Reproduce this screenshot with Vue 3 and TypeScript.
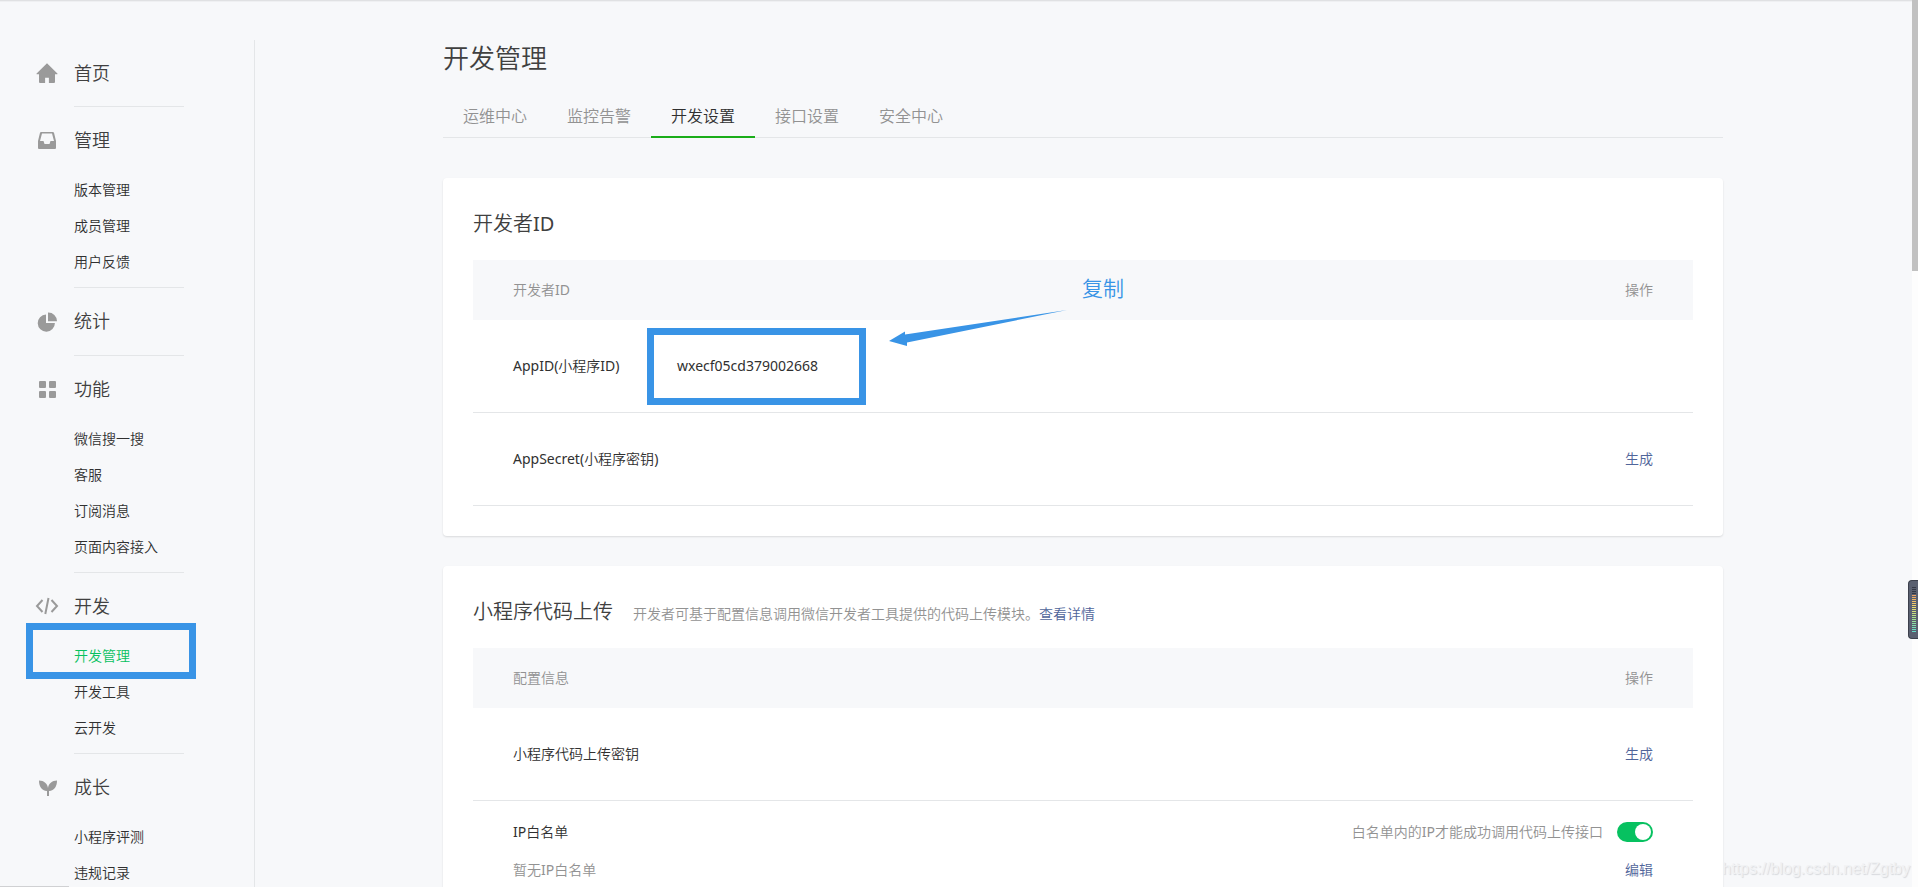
<script setup lang="ts">
import { ref } from 'vue'

interface NavGroup {
  title: string
  icon: string
  children: string[]
}

const groups: NavGroup[] = [
  { title: '首页', icon: 'home', children: [] },
  { title: '管理', icon: 'inbox', children: ['版本管理', '成员管理', '用户反馈'] },
  { title: '统计', icon: 'pie', children: [] },
  { title: '功能', icon: 'grid', children: ['微信搜一搜', '客服', '订阅消息', '页面内容接入'] },
  { title: '开发', icon: 'code', children: ['开发管理', '开发工具', '云开发'] },
  { title: '成长', icon: 'leaf', children: ['小程序评测', '违规记录'] },
]
const activeChild = '开发管理'

const tabs = ['运维中心', '监控告警', '开发设置', '接口设置', '安全中心']
const activeTab = ref('开发设置')
const whitelistOn = ref(true)
</script>

<template>
  <div class="page">
    <div class="shell">
      <nav class="sidebar" aria-label="主导航">
        <section v-for="g in groups" :key="g.title" class="group">
          <a href="#" class="group-title">
            <svg class="icon" viewBox="0 0 24 24" aria-hidden="true">
              <path v-if="g.icon === 'home'" d="M12 2.200 1.600 12.600c-.3.4-.1.7.3.7H4v7.600q0 1 1 1h5.100v-5.200h3.800v5.200H19q1 0 1-1v-7.600h2.100c.4 0 .6-.3.300-.7z" />
              <path v-else-if="g.icon === 'inbox'" fill-rule="evenodd" d="M6.200 4h11.600q.9 0 1.200.8L21 13v7q0 1-1 1H4q-1 0-1-1v-7l2-8.200Q5.300 4 6.200 4zM7 5.500 5 13h3.500l1 3h5l1-3H19l-2-7.500z" />
              <path v-else-if="g.icon === 'pie'" d="M11 5.500V14h8.900A8.600 8.600 0 1 1 11 5.500zM13 3.500a8.700 8.700 0 0 1 9 8.700h-9z" />
              <path v-else-if="g.icon === 'grid'" d="M5 4h5q1 0 1 1v5q0 1-1 1H5q-1 0-1-1V5q0-1 1-1zm10 0h5q1 0 1 1v5q0 1-1 1h-5q-1 0-1-1V5q0-1 1-1zM5 14h5q1 0 1 1v5q0 1-1 1H5q-1 0-1-1v-5q0-1 1-1zm10 0h5q1 0 1 1v5q0 1-1 1h-5q-1 0-1-1v-5q0-1 1-1z" />
              <path v-else-if="g.icon === 'code'" class="stroke" d="M7.500 6 2 12l5.500 6M16.500 6l5.500 6-5.500 6M13.500 4l-3.200 16" />
              <path v-else d="M4 5.500c5 .2 8.500 3 9 7.500.5-4.500 4-7.300 9-7.500 0 6-2.500 10-8 10.500v5h-2v-5C6.500 15.500 4 11.500 4 5.500z" />
            </svg>
            <span>{{ g.title }}</span>
          </a>
          <ul v-if="g.children.length" class="children">
            <li v-for="c in g.children" :key="c">
              <a href="#" :class="{ current: c === activeChild }">{{ c }}</a>
              <span v-if="c === activeChild" class="mark mark-nav"></span>
            </li>
          </ul>
        </section>
      </nav>

      <main class="main">
        <div class="content">
          <h1>开发管理</h1>
          <div class="tabs" role="tablist">
            <button
              v-for="t in tabs"
              :key="t"
              type="button"
              role="tab"
              class="tab"
              :class="{ active: t === activeTab }"
              :aria-selected="t === activeTab"
              @click="activeTab = t"
            >{{ t }}</button>
          </div>

          <section class="card">
            <div class="card-head"><h2>开发者<span class="latin">ID</span></h2></div>
            <table>
              <thead>
                <tr><th class="key">开发者<span class="latin">ID</span></th><th></th><th class="op">操作</th></tr>
              </thead>
              <tbody>
                <tr>
                  <td class="key"><span class="latin">AppID(</span>小程序<span class="latin">ID)</span></td>
                  <td class="value">
                    <span class="marked latin">wxecf05cd379002668<span class="mark mark-value"></span></span>
                  </td>
                  <td class="op"></td>
                </tr>
                <tr>
                  <td class="key"><span class="latin">AppSecret(</span>小程序密钥<span class="latin">)</span></td>
                  <td></td>
                  <td class="op"><a href="#">生成</a></td>
                </tr>
              </tbody>
            </table>
            <div class="callout">
              <span class="callout-text">复制</span>
              <svg class="arrow" viewBox="0 0 178 38" aria-hidden="true">
                <path d="M0 31 16 21.500v3L178 0 18 32.500V36z" />
              </svg>
            </div>
          </section>

          <section class="card">
            <div class="card-head">
              <h2>小程序代码上传</h2>
              <p>开发者可基于配置信息调用微信开发者工具提供的代码上传模块。<a href="#">查看详情</a></p>
            </div>
            <table>
              <thead>
                <tr><th class="key">配置信息</th><th></th><th class="op">操作</th></tr>
              </thead>
              <tbody>
                <tr>
                  <td class="key">小程序代码上传密钥</td>
                  <td></td>
                  <td class="op"><a href="#">生成</a></td>
                </tr>
              </tbody>
            </table>
            <div class="whitelist">
              <div class="line">
                <span><span class="latin">IP</span>白名单</span>
                <label class="switch-label">
                  <span>白名单内的<span class="latin">IP</span>才能成功调用代码上传接口</span>
                  <input v-model="whitelistOn" type="checkbox" role="switch" class="switch" />
                </label>
              </div>
              <div class="line">
                <span class="muted">暂无<span class="latin">IP</span>白名单</span>
                <a href="#">编辑</a>
              </div>
            </div>
          </section>
        </div>
      </main>
    </div>

    <div class="scrollbar"><div class="thumb"></div></div>
    <div class="meter"><div class="meter-bars"></div></div>
    <div class="status-edge"></div>
    <div class="watermark">https://blog.csdn.net/Zgtby</div>
  </div>
</template>

<style>
body {
  background: #f7f8fa;
}
</style>

<style scoped>
.page {
  position: relative;
  box-sizing: border-box;
  height: 100vh;
  overflow: hidden;
  background: #f7f8fa;
  color: #303030;
  font-family: "Noto Sans", "Noto Sans CJK SC", sans-serif;
  font-weight: 350;
  font-size: 14px;
  line-height: 20px;
  box-shadow: inset 0 1px 0 #e0e1e3, inset 0 2px 0 #eff0f2;
}
.latin {
  font-weight: 400;
}
a {
  color: #50659a;
  text-decoration: none;
}
h1,
h2,
p,
ul {
  margin: 0;
  padding: 0;
  font-weight: inherit;
}
.shell {
  display: flex;
  align-items: stretch;
  padding: 40px 7px 0 0;
}
.sidebar {
  flex: none;
  box-sizing: border-box;
  width: 255px;
  border-right: 1px solid #e4e6e8;
}
.group {
  position: relative;
  min-height: 67px;
  padding-top: 1px;
}
.group:first-child {
  min-height: 66px;
  padding-top: 0;
}
.group + .group::before {
  content: "";
  position: absolute;
  top: 0;
  left: 74px;
  width: 110px;
  height: 1px;
  background: #e4e6e8;
}
.group-title {
  display: flex;
  align-items: center;
  gap: 15px;
  height: 66px;
  padding-left: 35px;
  color: #404040;
  font-size: 18px;
  line-height: 26px;
}
.group:not(:first-child) .group-title:last-child {
  margin-bottom: 1px;
}
.icon {
  flex: none;
  width: 24px;
  height: 24px;
  fill: #9a9a9a;
}
.icon .stroke {
  fill: none;
  stroke: #9a9a9a;
  stroke-width: 2;
}
.children {
  list-style: none;
  padding-bottom: 6px;
}
.children li {
  position: relative;
  height: 36px;
  padding-left: 74px;
  line-height: 34px;
}
.children a {
  color: #303030;
}
.children a.current {
  color: #07c160;
}
.mark {
  position: absolute;
  box-sizing: border-box;
  border: 7px solid #3994e6;
  pointer-events: none;
}
.mark-nav {
  top: -16px;
  left: 26px;
  width: 170px;
  height: 56px;
}
.main {
  flex: 1;
  min-width: 0;
}
.content {
  max-width: 1280px;
  margin: 0 auto;
}
h1 {
  color: #404040;
  font-size: 26px;
  line-height: 36px;
}
.tabs {
  display: flex;
  margin: 20px 0 40px;
  border-bottom: 1px solid #e4e6e8;
}
.tab {
  height: 42px;
  margin: 0 0 -1px;
  padding: 0 20px;
  border: 0;
  border-bottom: 2px solid transparent;
  background: none;
  color: #929292;
  font: inherit;
  font-size: 16px;
}
.tab.active {
  border-color: #1aad19;
  color: #303030;
}
.card {
  position: relative;
  margin-bottom: 30px;
  padding: 30px;
  border-radius: 4px;
  background: #fff;
  box-shadow: 0 1px 2px rgba(0, 0, 0, 0.12);
}
.card-head {
  display: flex;
  align-items: baseline;
  gap: 20px;
  height: 52px;
}
h2 {
  color: #404040;
  font-size: 20px;
  line-height: 32px;
}
.card-head p,
.muted {
  color: #929292;
}
table {
  width: 100%;
  border-collapse: separate;
  border-spacing: 0;
  table-layout: fixed;
}
th,
td {
  padding: 0;
  text-align: left;
  font-weight: inherit;
}
th {
  height: 60px;
  background: #f7f8fa;
  color: #929292;
}
td {
  height: 92px;
  border-bottom: 1px solid #e4e6e8;
}
.key {
  width: 164px;
  padding-left: 40px;
  white-space: nowrap;
}
.op {
  width: 80px;
  padding-right: 40px;
  text-align: right;
}
.marked {
  position: relative;
}
.mark-value {
  top: -28px;
  left: -30px;
  width: 219px;
  height: 77px;
}
.callout {
  position: absolute;
  top: 95px;
  left: 446px;
  width: 236px;
  color: #3994e6;
}
.callout-text {
  display: block;
  margin-left: 193px;
  font-size: 21px;
  line-height: 30px;
}
.arrow {
  display: block;
  width: 178px;
  height: 38px;
  margin-top: 7px;
  fill: #3994e6;
}
.whitelist {
  display: grid;
  gap: 18px;
  padding: 21px 40px 22px;
}
.line {
  display: flex;
  align-items: center;
  justify-content: space-between;
}
.switch-label {
  display: flex;
  align-items: center;
  gap: 14px;
  color: #929292;
}
.switch {
  appearance: none;
  width: 36px;
  height: 20px;
  margin: 0;
  border-radius: 10px;
  background: #d9d9d9;
}
.switch::before {
  content: "";
  display: block;
  width: 16px;
  height: 16px;
  margin: 2px;
  border-radius: 50%;
  background: #fff;
}
.switch:checked {
  background: #07c160;
}
.switch:checked::before {
  margin-left: 18px;
}
.scrollbar {
  position: absolute;
  top: 0;
  right: 0;
  bottom: 0;
  width: 6px;
  background: #fdfdfd;
}
.thumb {
  height: 271px;
  background: #c1c1c1;
}
.meter {
  position: absolute;
  top: 580px;
  right: 0;
  box-sizing: border-box;
  width: 10px;
  height: 59px;
  padding: 6px 2px 6px 3px;
  border: 1px solid #3c404c;
  border-right: 0;
  border-radius: 4px 0 0 4px;
  background: #5a6070;
}
.meter-bars {
  height: 45px;
  background:
    repeating-linear-gradient(transparent 0 1px, #5a6070 1px 2px),
    linear-gradient(#343844 0 8px, #f0a060 8px, #f2dc6e 20px, #a4e48e 32px, #62dccb 45px);
}
.status-edge {
  position: absolute;
  left: 0;
  bottom: 0;
  width: 69px;
  height: 1px;
  background: #d0d1d3;
}
.watermark {
  position: absolute;
  right: 8px;
  bottom: 8px;
  color: #f1f2f4;
  font-family: "Liberation Sans", Arial, sans-serif;
  font-size: 16px;
  font-weight: 400;
  line-height: 20px;
  text-shadow: 1px 1px 1px #d6d8dc;
}
</style>
